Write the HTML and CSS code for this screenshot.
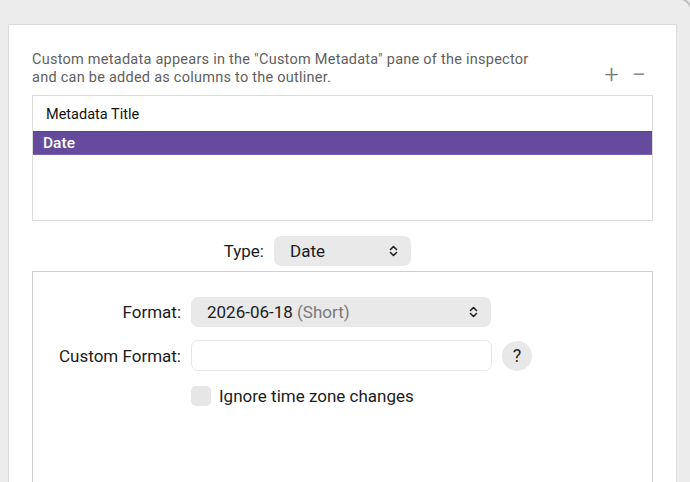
FILE: index.html
```html
<!DOCTYPE html>
<html lang="en">

<head>
    <meta charset="UTF-8">
    <title>Custom Metadata</title>
    <link rel="stylesheet" href="styles.css">
</head>

<body>
    <div class="window-corner"></div>

    <div class="panel">
        <div class="intro">
            <p class="hint">Custom metadata appears in the "Custom Metadata" pane of the inspector<br>and can be added as columns to the outliner.</p>
            <div class="tools">
                <span class="tool">+</span>
                <span class="tool">&minus;</span>
            </div>
        </div>

        <div class="list">
            <div class="row">Metadata Title</div>
            <div class="row selected">Date</div>
        </div>

        <div class="type-row">
            <span class="label">Type:</span>
            <div class="popup type-popup">
                <span>Date</span>
                <svg class="chevron" width="9" height="12" viewBox="0 0 9 12"><path d="M1.5 4.5 L4.5 1.5 L7.5 4.5 M1.5 7.5 L4.5 10.5 L7.5 7.5" fill="none" stroke="#222" stroke-width="1.6" stroke-linecap="round" stroke-linejoin="round"/></svg>
            </div>
            <span></span>
        </div>

        <div class="options">
            <div class="form">
                <span class="label">Format:</span>
                <div class="popup format-popup">
                    <span>2026-06-18 <span class="muted">(Short)</span></span>
                    <svg class="chevron" width="9" height="12" viewBox="0 0 9 12"><path d="M1.5 4.5 L4.5 1.5 L7.5 4.5 M1.5 7.5 L4.5 10.5 L7.5 7.5" fill="none" stroke="#222" stroke-width="1.6" stroke-linecap="round" stroke-linejoin="round"/></svg>
                </div>
                <span></span>

                <span class="label">Custom Format:</span>
                <div class="field"></div>
                <span class="help">?</span>

                <span></span>
                <label class="check"><span class="box"></span>Ignore time zone changes</label>
                <span></span>
            </div>
        </div>
    </div>
</body>

</html>
```

FILE: styles.css
```css
body {
    margin: 0;
    background-color: #ececec;
    font-family: Roboto, "Liberation Sans", sans-serif;
    color: #1f1f1f;
    height: 482px;
    overflow: hidden;
}

/* edge of the window behind */
.window-corner {
    position: absolute;
    right: -3px;
    top: -3px;
    width: 40px;
    height: 40px;
    border-top: 2px solid #bdbdbd;
    border-right: 2px solid #bdbdbd;
    border-top-right-radius: 16px;
}

.panel {
    margin: 24px 13px 0 8px;
    height: 470px;
    background-color: #fff;
    border: 1px solid #dadada;
    border-bottom: none;
    padding: 0 23px;
}

.intro {
    display: flex;
    justify-content: space-between;
    align-items: flex-end;
    padding-top: 26px;
}

.hint {
    margin: 0;
    font-size: 14.5px;
    letter-spacing: 0.25px;
    line-height: 18px;
    color: #5f5f5f;
}

.tools {
    display: flex;
    gap: 13px;
    margin-right: 7px;
    margin-bottom: 1px;
}

.tool {
    font-size: 25px;
    font-weight: 300;
    color: #777;
    line-height: 22px;
}

.list {
    margin-top: 8px;
    height: 124px;
    border: 1px solid #dcdcdc;
}

.row {
    height: 35px;
    line-height: 37px;
    padding-left: 13px;
    font-size: 14.5px;
    color: #111;
}

.row.selected {
    height: 22px;
    line-height: 22px;
    padding-left: 10px;
    background-color: #654b9d;
    border-top: 1px solid #5a3f9c;
    border-bottom: 1px solid #7a62b4;
    color: #fff;
    font-weight: 500;
    font-size: 15.5px;
}

.type-row {
    display: grid;
    grid-template-columns: 1fr auto 1fr;
    align-items: center;
    column-gap: 10px;
    margin-top: 15px;
}

.type-row .label {
    justify-self: end;
}

.label {
    font-size: 17px;
    color: #1c1c1c;
}

.popup {
    display: flex;
    justify-content: space-between;
    align-items: center;
    height: 30px;
    background-color: #e9e9e9;
    border-radius: 7px;
    padding: 0 13px 0 16px;
    font-size: 17px;
    color: #1c1c1c;
    box-sizing: border-box;
}

.type-popup {
    width: 137px;
}

.muted {
    color: #7a7a7a;
}

.options {
    margin-top: 5px;
    height: 300px;
    border: 1px solid #cfcfcf;
    border-bottom: none;
}

.form {
    display: grid;
    grid-template-columns: 148px 301px 40px;
    column-gap: 10px;
    row-gap: 13px;
    align-items: center;
    margin-top: 25px;
}

.form .label {
    justify-self: end;
}

.format-popup {
    width: 300px;
}

.field {
    height: 31px;
    border: 1px solid #e6e6e6;
    border-radius: 7px;
    box-sizing: border-box;
}

.help {
    width: 30px;
    height: 30px;
    border-radius: 50%;
    background-color: #e8e8e8;
    text-align: center;
    line-height: 30px;
    font-size: 18px;
    color: #222;
}

.check {
    display: flex;
    align-items: center;
    gap: 8px;
    font-size: 17px;
    color: #1c1c1c;
    margin-top: 2px;
}

.box {
    width: 20px;
    height: 20px;
    border-radius: 5px;
    background-color: #e6e6e6;
}
```
